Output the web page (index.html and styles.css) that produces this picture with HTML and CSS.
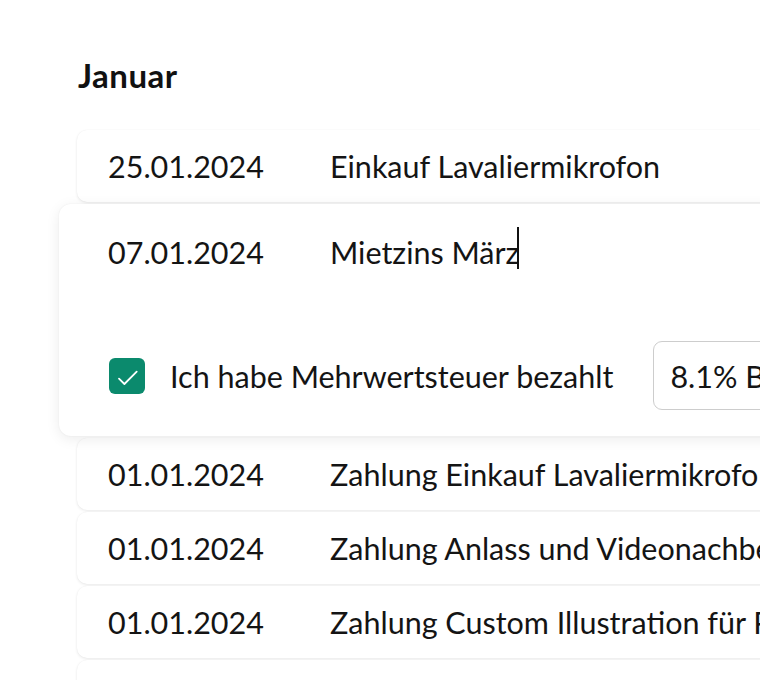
FILE: index.html
```html
<!DOCTYPE html>
<html lang="de">
<head>
<meta charset="utf-8">
<title>Buchungen</title>
<link rel="stylesheet" href="styles.css">
</head>
<body>
<main class="page">
  <h2 class="month">Januar</h2>
  <div class="list">
    <div class="row">
      <span class="date">25.01.2024</span>
      <span class="desc">Einkauf Lavaliermikrofon</span>
    </div>
    <div class="row row-open">
      <div class="open-head">
        <span class="date">07.01.2024</span>
        <span class="desc desc-edit">Mietzins März<span class="caret"></span></span>
      </div>
      <div class="open-opts">
        <label class="check">
          <span class="box">
            <svg viewBox="0 0 36 36" width="36" height="36" aria-hidden="true"><path d="M10 20.7 L15.4 26 L27.7 13.7" fill="none" stroke="#fff" stroke-width="1.8" stroke-linecap="round" stroke-linejoin="round"/></svg>
          </span>
          <span class="check-text">Ich habe Mehrwertsteuer bezahlt</span>
        </label>
        <div class="select">8.1% Bruttosatz</div>
      </div>
    </div>
    <div class="row">
      <span class="date">01.01.2024</span>
      <span class="desc">Zahlung Einkauf Lavaliermikrofon</span>
    </div>
    <div class="row">
      <span class="date">01.01.2024</span>
      <span class="desc">Zahlung Anlass und Videonachbearbeitung</span>
    </div>
    <div class="row">
      <span class="date">01.01.2024</span>
      <span class="desc">Zahlung Custom Illustration für Podcast</span>
    </div>
    <div class="row">
      <span class="date">01.01.2024</span>
      <span class="desc">Zahlung Webseite</span>
    </div>
  </div>
</main>
</body>
</html>
```
FILE: styles.css
```css
html, body {
  margin: 0;
  padding: 0;
  background: #ffffff;
  overflow: hidden;
}
body {
  font-family: "Lato", "Liberation Sans", sans-serif;
  color: #141414;
}
.page {
  padding: 55px 0 0 59px;
  width: 1000px;
}
.month {
  margin: 0 0 35px 19px;
  font-size: 33px;
  line-height: 40px;
  letter-spacing: 0.5px;
  font-weight: 700;
  color: #111;
}
.list {
  display: flex;
  flex-direction: column;
  gap: 2px;
}
.row {
  display: flex;
  align-items: center;
  height: 72px;
  margin-left: 18px;
  padding-left: 31px;
  width: 860px;
  background: #fff;
  border-radius: 10px;
  box-shadow: 0 1px 3px rgba(0,0,0,0.09), 0 0 1px rgba(0,0,0,0.06);
  font-size: 30.5px;
  white-space: nowrap;
  overflow: hidden;
}
.date {
  flex: 0 0 222px;
}
.desc {
  flex: 0 0 auto;
}
.row-open {
  position: relative;
  z-index: 1;
  height: auto;
  margin-left: 0;
  padding: 12px 0 26px 49px;
  display: block;
  border-radius: 12px;
  box-shadow: 0 3px 14px rgba(0,0,0,0.08), 0 0 2px rgba(0,0,0,0.06);
  overflow: visible;
}
.open-head {
  display: flex;
  align-items: center;
  height: 72px;
}
.desc-edit {
  display: inline-flex;
  align-items: center;
}
.caret {
  display: inline-block;
  width: 2px;
  height: 42px;
  margin-left: -2px;
  margin-bottom: 8px;
  background: #111;
}
.open-opts {
  display: flex;
  align-items: center;
  margin-top: 53px;
  height: 69px;
}
.check {
  display: flex;
  align-items: center;
  gap: 25px;
  margin-left: 1px;
}
.box {
  display: block;
  width: 36px;
  height: 36px;
  border-radius: 6px;
  background: #0b8a6d;
}
.box svg {
  display: block;
}
.select {
  margin-left: 40px;
  height: 69px;
  box-sizing: border-box;
  width: 300px;
  display: flex;
  align-items: center;
  padding-left: 16px;
  border: 1.5px solid #cdcdcd;
  border-radius: 9px;
  background: #fff;
}
```
